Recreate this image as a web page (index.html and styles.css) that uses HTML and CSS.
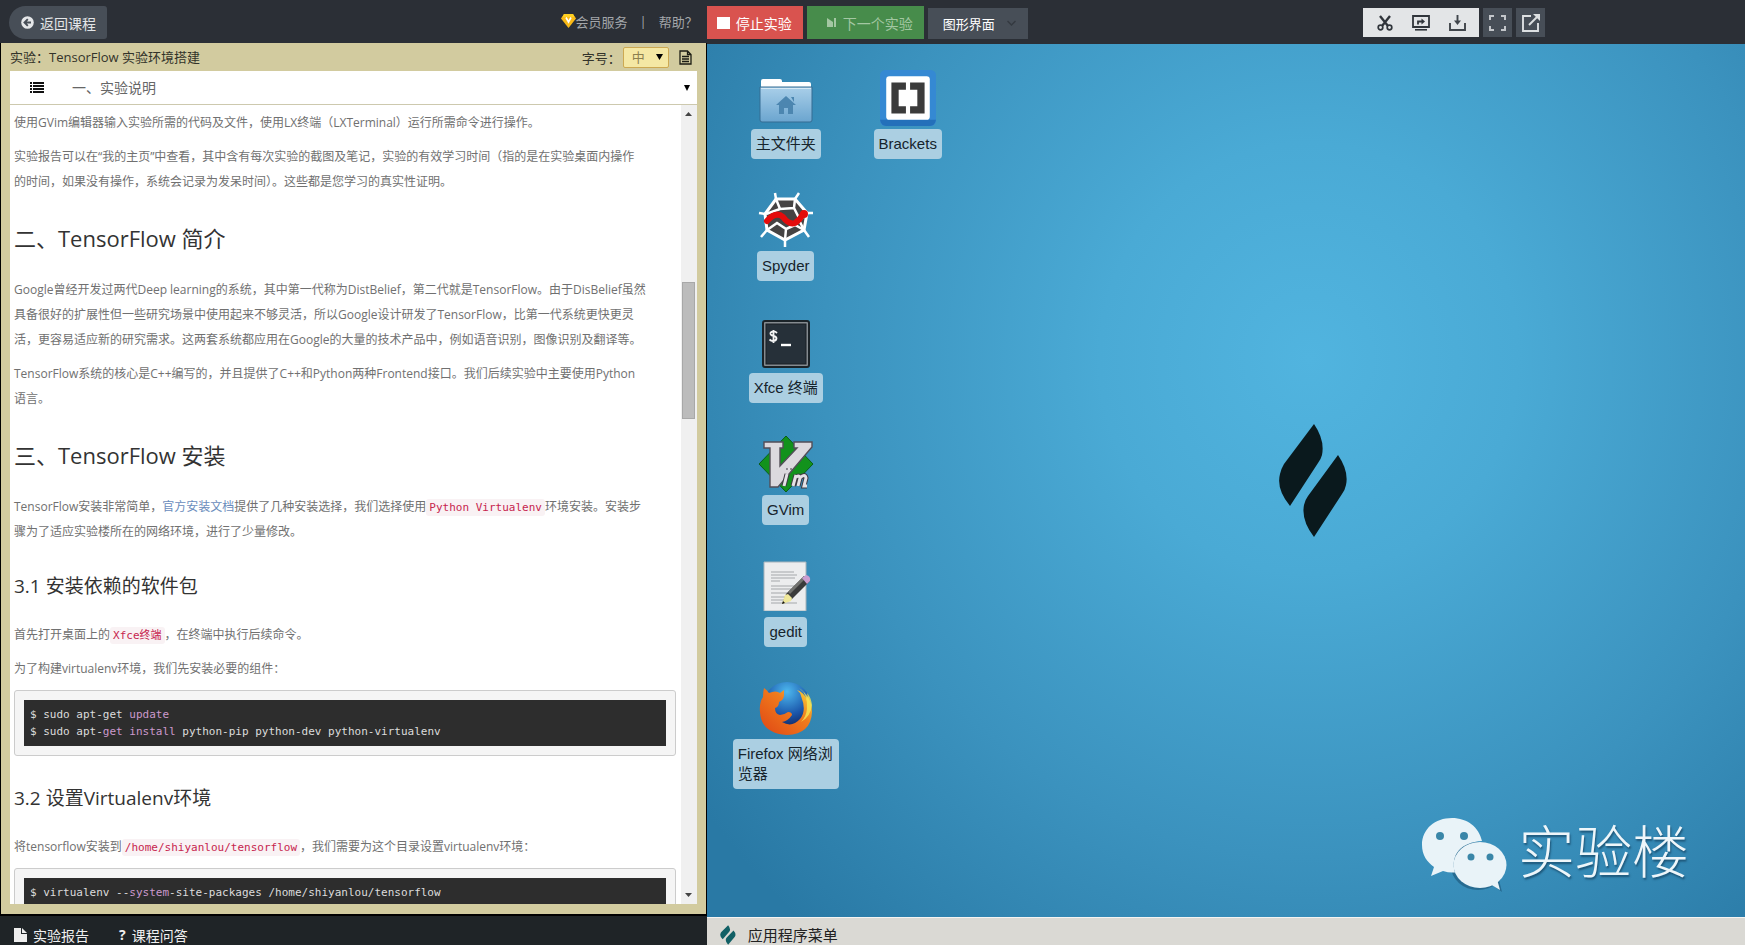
FILE: index.html
```html
<!DOCTYPE html>
<html lang="zh-CN">
<head>
<meta charset="utf-8">
<title>TensorFlow 实验环境搭建</title>
<link rel="stylesheet" href="styles.css">
</head>
<body>
<div class="app">
  <section class="lesson">
    <header class="bar">
      <button class="back" type="button">
        <svg width="13" height="13" viewBox="0 0 13 13"><circle cx="6.5" cy="6.5" r="6.3" fill="#e4e6e8"/><path d="M10 6.5H4M6.800 3.200L3.500 6.500L6.800 9.800" fill="none" stroke="#474e57" stroke-width="1.900"/></svg>
        返回课程
      </button>
      <nav class="links">
        <a href="#vip"><svg width="15" height="14" viewBox="0 0 15 14"><path d="M3 0h9l3 4.500L7.500 14L0 4.500z" fill="#f9b916"/><path d="M3 0h9l1.500 3h-12z" fill="#ffd021"/><path d="M5 3.500L7.500 8L10 3.500" fill="none" stroke="#fff" stroke-width="1.600"/></svg>会员服务</a>
        <span class="sep">|</span>
        <a href="#help">帮助？</a>
      </nav>
    </header>
    <div class="frame">
      <div class="titlebar">
        <h1>实验：TensorFlow 实验环境搭建</h1>
        <div class="tools">
          <label for="size">字号：</label>
          <span class="pick">
            <select id="size" class="size"><option>中</option></select>
            <svg class="tri" width="7" height="6" viewBox="0 0 7 6"><path d="M0 0h7L3.500 6z" fill="#000"/></svg>
          </span>
          <button class="doc" type="button" aria-label="文档">
            <svg width="13" height="15" viewBox="0 0 13 15"><path d="M1 1h7.500L12 4.500V14H1zM8.500 1v3.500H12M3 6.500h7M3 9h7M3 11.500h7" fill="none" stroke="#1c1c14" stroke-width="1.300"/></svg>
          </button>
        </div>
      </div>
      <div class="chapter">
        <svg width="14" height="11" viewBox="0 0 14 11"><path d="M0 1h2M0 4h2M0 7h2M0 10h2M3 1h11M3 4h11M3 7h11M3 10h11" stroke="#111" stroke-width="2"/></svg>
        <span class="pick grow">
          <select class="section" aria-label="章节"><option>一、实验说明</option></select>
          <svg class="tri" width="6" height="6" viewBox="0 0 6 6"><path d="M0 0h6L3 6z" fill="#000"/></svg>
        </span>
      </div>
      <div class="reader">
        <article class="doc-body">
          <p>使用GVim编辑器输入实验所需的代码及文件，使用LX终端（LXTerminal）运行所需命令进行操作。</p>
          <p>实验报告可以在“我的主页”中查看，其中含有每次实验的截图及笔记，实验的有效学习时间（指的是在实验桌面内操作<br>的时间，如果没有操作，系统会记录为发呆时间）。这些都是您学习的真实性证明。</p>
          <h2>二、TensorFlow 简介</h2>
          <p>Google曾经开发过两代Deep learning的系统，其中第一代称为DistBelief，第二代就是TensorFlow。由于DisBelief虽然<br>具备很好的扩展性但一些研究场景中使用起来不够灵活，所以Google设计研发了TensorFlow，比第一代系统更快更灵<br>活，更容易适应新的研究需求。这两套系统都应用在Google的大量的技术产品中，例如语音识别，图像识别及翻译等。</p>
          <p>TensorFlow系统的核心是C++编写的，并且提供了C++和Python两种Frontend接口。我们后续实验中主要使用Python<br>语言。</p>
          <h2>三、TensorFlow 安装</h2>
          <p>TensorFlow安装非常简单，<a href="#docs">官方安装文档</a>提供了几种安装选择，我们选择使用<code>Python Virtualenv</code>环境安装。安装步<br>骤为了适应实验楼所在的网络环境，进行了少量修改。</p>
          <h3>3.1 安装依赖的软件包</h3>
          <p>首先打开桌面上的<code>Xfce终端</code>，在终端中执行后续命令。</p>
          <p>为了构建virtualenv环境，我们先安装必要的组件：</p>
          <div class="block"><pre>$ sudo apt-get <b>update</b>
$ sudo apt-<b>get</b> <b>install</b> python-pip python-dev python-virtualenv</pre></div>
          <h3>3.2 设置Virtualenv环境</h3>
          <p>将tensorflow安装到<code>/home/shiyanlou/tensorflow</code>，我们需要为这个目录设置virtualenv环境：</p>
          <div class="block"><pre>$ virtualenv --<b>system</b>-site-packages /home/shiyanlou/tensorflow</pre></div>
        </article>
        <div class="scroll">
          <svg width="7" height="4" viewBox="0 0 7 4"><path d="M0 4h7L3.500 0z" fill="#444"/></svg>
          <div class="track"><div class="thumb"></div></div>
          <svg width="7" height="4" viewBox="0 0 7 4"><path d="M0 0h7L3.500 4z" fill="#444"/></svg>
        </div>
      </div>
    </div>
    <footer class="foot">
      <a href="#report"><svg width="13" height="14" viewBox="0 0 13 14"><path d="M0 0h7v6h6v8H0z" fill="#eee"/><path d="M8 0l5 5H8z" fill="#eee"/></svg>实验报告</a>
      <a href="#qa"><strong>?</strong>课程问答</a>
    </footer>
  </section>

  <section class="remote">
    <header class="bar actions">
      <button class="stop" type="button"><svg width="13" height="12" viewBox="0 0 13 12"><path d="M0 0h13v12H0z" fill="#fff"/></svg>停止实验</button>
      <button class="next" type="button"><svg width="9" height="9" viewBox="0 0 9 9"><path d="M0 0L6 4V9H0zM7 0h2v9H7z" fill="#a3c7a2"/></svg>下一个实验</button>
      <span class="pick">
        <select class="mode" aria-label="界面"><option>图形界面</option></select>
        <svg class="tri" width="9" height="6" viewBox="0 0 9 6"><path d="M.500 1L4.500 5L8.500 1" fill="none" stroke="#343a41" stroke-width="1.500"/></svg>
      </span>
      <div class="icons">
        <div class="group">
          <button type="button" aria-label="剪切"><svg width="16" height="16" viewBox="0 0 16 16" fill="none" stroke="#30353b"><path d="M3 1L11 11M13 1L5 11" stroke-width="2.400"/><circle cx="3.500" cy="12.500" r="2.300" stroke-width="1.700"/><circle cx="12.500" cy="12.500" r="2.300" stroke-width="1.700"/></svg></button>
          <button type="button" aria-label="共享屏幕"><svg width="18" height="16" viewBox="0 0 18 16" fill="none" stroke="#30353b"><path d="M1 1h16v11H1z" stroke-width="1.800"/><path d="M3 14.800h12" stroke-width="1.600"/><path d="M6 9.500V6.500h4" stroke-width="1.800"/><path d="M9.500 3.500L13 6.500L9.500 9.500z" fill="#30353b" stroke="none"/></svg></button>
          <button type="button" aria-label="下载"><svg width="17" height="16" viewBox="0 0 17 16" fill="none" stroke="#40454b"><path d="M1 8v7h15V8" stroke-width="1.900"/><path d="M8.500 0v8" stroke-width="1.900"/><path d="M5 5.500h7L8.500 10z" fill="#40454b" stroke="none"/></svg></button>
        </div>
        <button class="dark" type="button" aria-label="全屏"><svg width="17" height="16" viewBox="0 0 17 16"><path d="M1 5V1h4M12 1h4v4M16 11v4h-4M5 15H1v-4" fill="none" stroke="#c3c6ca" stroke-width="2"/></svg></button>
        <button class="dark" type="button" aria-label="新窗口"><svg width="18" height="18" viewBox="0 0 18 18"><path d="M9 2H1v15h15V9" fill="none" stroke="#dde0e2" stroke-width="1.900"/><path d="M7 11L15 3" stroke="#dde0e2" stroke-width="2"/><path d="M11 0h7v7z" fill="#dde0e2"/></svg></button>
      </div>
    </header>
    <main class="desktop">
      <div class="launchers">
        <div class="item"><span class="pic low"><svg width="54" height="46" viewBox="0 0 54 46"><defs><linearGradient id="fold" x2="0" y2="1"><stop offset="0" stop-color="#a9cfe9"/><stop offset="1" stop-color="#6ba5cf"/></linearGradient></defs><path d="M2 12V3q0-2 2-2h17q2 0 2 2v1h27q2 0 2 2v7z" fill="#fff"/><path d="M1 9h52v33q0 2-2 2H3q-2 0-2-2z" fill="url(#fold)" stroke="#356c93"/><path d="M2 10.500h50" stroke="#d6e9f5"/><path d="M27 18l10 9h-3v9h-5v-6h-4v6h-5v-9h-3zM32 19h3v5z" fill="#4c86b0"/></svg></span><span class="name">主文件夹</span></div>
        <div class="item"><span class="pic"><svg width="56" height="56" viewBox="0 0 54 54"><rect width="54" height="54" rx="5" fill="#3589d3"/><path d="M0 48h54q-1 6-6 6H6q-5 0-6-6" fill="#2470ba"/><rect x="6" y="6" width="42" height="42" rx="3" fill="#fff"/><path d="M11 12h14v7h-7v16h7v7H11zM43 12H29v7h7v16h-7v7h14z" fill="#3b3b3b"/></svg></span><span class="name">Brackets</span></div>
        <div class="item"><span class="pic"><svg width="56" height="56" viewBox="0 0 56 56"><path d="M18 7h19l12 14-3 17-19 10L9 38 7 22z" fill="#454343" stroke="#fff" stroke-width="3"/><path d="M18 7L17 1M37 7l4-6M49 21h6M46 38l5 7M27 48v7M9 38l-6 7M7 22l-6-1" stroke="#fff" stroke-width="2.500"/><path d="M18 7l4 10 14-1 1-9M36 16l6 12M42 28l7-7M22 17L8 22M42 30l4 8M27 48l1-11-9-6L9 38M28 37l9-4 9 5" fill="none" stroke="#fff" stroke-width="2.500"/><path d="M9 29q9-10 16-4 6 8 12 6 5-3 8-9" fill="none" stroke="#e40b0b" stroke-width="6" stroke-linecap="round"/><circle cx="46" cy="22" r="4" fill="#e40b0b"/></svg></span><span class="name">Spyder</span></div>
        <div class="item"><span class="pic low"><svg width="48" height="48" viewBox="0 0 48 48"><rect x="1" y="1" width="46" height="46" rx="2" fill="#858b90" stroke="#1b2328" stroke-width="2"/><rect x="4" y="4" width="40" height="40" fill="#263039" stroke="#1a2026"/><path d="M15 13q-2-2-4-1.500-3 .5-2.500 2.500.5 1.500 3 2 3 .5 3 2.500-.5 2.500-3.500 2.500-2 0-3.500-1.500M11.500 10v13" fill="none" stroke="#f4f5f5" stroke-width="1.800"/><path d="M19 25h10" stroke="#fff" stroke-width="2.400"/></svg></span><span class="name">Xfce 终端</span></div>
        <div class="item"><span class="pic"><svg width="56" height="56" viewBox="0 0 56 56"><path d="M28 0L55 28 28 56 1 28z" fill="#12921c" stroke="#0b5e18"/><path d="M6 6h19v6h-3v18L39 12h-3V6h18v5L20 51h-8V12H6z" fill="#dcd9de" stroke="#534e58" stroke-width="1.400"/><g fill="none" stroke="#3e3a42" stroke-width="5"><path d="M29 38l-3 12M35 50l3-11M37 42q4-4 5 0l-2 8M42 42q5-5 6 0l-2 8h3M31 32v2"/></g><g fill="none" stroke="#e4e1e6" stroke-width="3"><path d="M29 38l-3 12M35 50l3-11M37 42q4-4 5 0l-2 8M42 42q5-5 6 0l-2 8h3M31 32v2"/></g></svg></span><span class="name">GVim</span></div>
        <div class="item"><span class="pic"><svg width="50" height="50" viewBox="0 0 50 50"><path d="M3 1h42v49H3z" fill="#ecedee" stroke="#a8b4bb"/><path d="M10 11h23M10 14h26M10 17h24M10 20h9M10 25h26M10 28h20M10 32h18M10 36h15M10 39h13M10 42h26" stroke="#a4a7aa"/><path d="M21 43l4-10 18-18 6 5-18 18z" fill="#3a3b3b"/><path d="M27 31L43 15l2 2-16 16z" fill="#72736f"/><path d="M21 43l3-9 3-1 4 4-1 3z" fill="#efe89b"/><path d="M21 43l1-3 2 2z" fill="#111"/><path d="M41 17l4-3q5 1 4 6l-3 3z" fill="#ca9dd0"/></svg></span><span class="name">gedit</span></div>
        <div class="item"><span class="pic"><svg width="54" height="54" viewBox="0 0 54 54"><defs><radialGradient id="globe" cx=".5" cy=".2" r=".8"><stop offset="0" stop-color="#4db8ee"/><stop offset=".6" stop-color="#1b57ab"/><stop offset="1" stop-color="#101f57"/></radialGradient><linearGradient id="fox" x1="0" y1="1" x2="1" y2="0"><stop offset="0" stop-color="#df4514"/><stop offset=".6" stop-color="#f07b1d"/><stop offset="1" stop-color="#fbe33d"/></linearGradient></defs><circle cx="28" cy="25" r="24" fill="url(#globe)"/><path d="M5 7q3 2 5 5 7-3 11 0l4-3v5q0 5-5 7 0 5-4 6 0 6 5 7 4 0 8-3 4 0 4 3-4 6-10 7 10 6 18-3 7-8 1-23-1-4-4-6 6 2 10 9 0-3-1-5 6 8 6 18-1 22-25 23Q2 52 1 31 0 22 4 16 4 11 5 7z" fill="url(#fox)"/><path d="M40 7q9 6 8 21-1 8-6 13 10-6 11-17-1-8-5-12l1 5q-3-6-9-10z" fill="#f7e955" opacity=".8"/></svg></span><span class="name">Firefox 网络浏览器</span></div>
      </div>
      <svg class="emblem" width="71" height="116" viewBox="0 0 71 116"><path d="M36 1Q47 17 44 32Q43 36 40 40L12 83Q-2 66 2 51Q3 46 6 41ZM60 32Q71 48 68 62Q67 67 64 71L36 114Q23 97 26 82Q27 77 30 73Z" fill="#0a191d"/></svg>
      <div class="mark">
        <svg width="88" height="76" viewBox="0 0 88 76"><g fill="#1d5577" opacity=".6"><ellipse cx="57" cy="49" rx="27" ry="24"/><path d="M70 67l11 8-3-12z"/></g><path d="M31 1C14 1 1 12 1 28c0 10 5 17 12 22l-3 9 12-5q6 2 12 1.500C29 38 40 25 61 24 58 10 46 1 31 1z" fill="#e9f3f8"/><ellipse cx="59" cy="48" rx="26.500" ry="23" fill="#e9f3f8"/><path d="M69 67l10 6-3-11z" fill="#e9f3f8"/><g fill="#3a86a8"><circle cx="19" cy="19" r="4"/><circle cx="43" cy="19" r="4"/><circle cx="50" cy="40" r="3.500"/><circle cx="69" cy="40" r="3.500"/></g></svg>
        <span>实验楼</span>
      </div>
    </main>
    <footer class="taskbar">
      <button type="button"><svg width="16" height="20" viewBox="0 0 71 116" preserveAspectRatio="none"><path d="M36 1Q47 17 44 32Q43 36 40 40L12 83Q-2 66 2 51Q3 46 6 41ZM60 32Q71 48 68 62Q67 67 64 71L36 114Q23 97 26 82Q27 77 30 73Z" fill="#116065"/></svg>应用程序菜单</button>
    </footer>
  </section>
</div>
</body>
</html>
```
FILE: styles.css
```css
* { box-sizing: border-box; }
body {
  margin: 0;
  font-family: "Open Sans", "Noto Sans CJK SC", sans-serif;
  font-size: 12px;
}
button, select {
  font: inherit;
  color: inherit;
  border: 0;
  margin: 0;
  padding: 0;
  background: none;
  appearance: none;
}
a { color: inherit; text-decoration: none; }
svg { display: block; flex: none; }
.app { display: flex; height: 100vh; overflow: hidden; background: #000; }
.lesson { flex: 0 0 40.5%; min-width: 0; display: flex; flex-direction: column; }
.remote { flex: 1; min-width: 0; display: flex; flex-direction: column; }

.bar {
  flex: none;
  display: flex;
  align-items: center;
  height: 43px;
  padding: 2px 9px 0;
  background: #2b2f36;
}
.back {
  display: flex;
  align-items: center;
  gap: 6px;
  height: 33px;
  padding: 0 11px 0 12px;
  border-radius: 17px 3px 3px 17px;
  background: #474e57;
  color: #e4e6e8;
  font-size: 14px;
}
.links {
  display: flex;
  align-items: center;
  gap: 12px;
  margin: 0 0 3px auto;
  color: #a3a6aa;
  font-size: 13px;
}
.links a { display: flex; align-items: center; }

.frame {
  flex: 1;
  min-height: 0;
  display: flex;
  flex-direction: column;
  margin: 0 1px 2px;
  padding: 0 9px 10px;
  background: #d2cb9f;
}
.titlebar {
  flex: none;
  display: flex;
  align-items: center;
  justify-content: space-between;
  height: 28px;
  color: #33332a;
}
.titlebar h1 { margin: 0 0 2px; font-size: 13px; font-weight: 400; }
.tools { display: flex; align-items: center; padding-right: 5px; font-size: 13px; }
.pick { position: relative; display: flex; align-items: center; }
.pick.grow { flex: 1; }
.tri { position: absolute; right: 7px; pointer-events: none; }
.size {
  width: 46px;
  height: 21px;
  margin: 0 10px 0 2px;
  padding-left: 8px;
  border: 1px solid #cda952;
  border-radius: 2px;
  background: #f5e8a4;
  color: #8b8050;
}
.tools .tri { right: 16px; }
.chapter {
  flex: none;
  display: flex;
  align-items: center;
  height: 34px;
  padding-left: 20px;
  background: #fff;
  border-bottom: 1px solid #cdc9ae;
}
.section {
  width: 100%;
  height: 28px;
  padding-left: 28px;
  color: #666;
  font-size: 14px;
}
.reader { flex: 1; min-height: 0; display: flex; overflow: hidden; background: #fff; }
.doc-body {
  flex: 1;
  min-width: 0;
  padding: 5px 5px 0 4px;
  color: #707070;
  line-height: 25px;
  white-space: nowrap;
}
.doc-body p { margin: 0 0 9px; }
.doc-body a { color: #6a8cbc; }
.doc-body h2 {
  margin: 28px 0 23px;
  color: #333;
  font-size: 22px;
  font-weight: 400;
  line-height: 32px;
}
.doc-body h3 {
  margin: 28px 0 22px;
  color: #333;
  font-size: 19px;
  font-weight: 400;
  line-height: 28px;
}
.doc-body code {
  padding: 2px 3px;
  border-radius: 3px;
  background: #f9f2f4;
  color: #c7254e;
  font: 11px "DejaVu Sans Mono", "Noto Sans CJK SC", monospace;
}
.block {
  padding: 9px;
  border: 1px solid #ccc;
  border-radius: 3px;
  background: #f5f5f5;
}
.block pre {
  margin: 0;
  padding: 6px;
  background: #2d2d2d;
  color: #dcdcdc;
  font: 11px/17px "DejaVu Sans Mono", monospace;
}
.block b { color: #cc99cc; font-weight: 400; }
.scroll {
  flex: none;
  display: flex;
  flex-direction: column;
  align-items: center;
  width: 16px;
  padding: 7px 0;
  background: #f0f0f0;
}
.track { flex: 1; width: 13px; padding-top: 166px; }
.thumb { height: 20%; min-height: 137px; border: 1px solid #a8a8a8; background: #bcbcbc; }
.foot {
  flex: none;
  display: flex;
  align-items: center;
  gap: 30px;
  height: 29px;
  padding: 8px 14px 0;
  background: #1f2427;
  color: #f0f0f0;
  font-size: 14px;
}
.foot a { display: flex; align-items: center; gap: 6px; }

.actions { height: 44px; gap: 4px; padding: 1px 0 0; }
.stop, .next {
  display: flex;
  align-items: center;
  height: 33px;
  color: #fff;
  font-size: 14px;
}
.stop { gap: 6px; padding: 0 11px 0 10px; background: #d9534f; }
.next { gap: 7px; padding: 0 11px 0 20px; background: #478c4b; color: #a3c7a2; }
.mode {
  width: 100px;
  height: 31px;
  margin: 2px 0 0;
  padding-left: 15px;
  background: #474e57;
  color: #fff;
  font-size: 13px;
}
.actions .tri { right: 12px; }
.icons { display: flex; gap: 4px; margin: 0 200px 0 auto; }
.group { display: flex; background: #e3e5e7; padding: 0 4px; }
.group button { display: grid; place-items: center; width: 36px; height: 29px; }
.dark { display: grid; place-items: center; width: 29px; height: 29px; background: #474e57; }

.desktop {
  position: relative;
  flex: 1;
  min-height: 0;
  background: radial-gradient(ellipse 72% 88% at 58% 36%, #51b4df 0%, #4aaad5 28%, #3b92be 65%, #2979a5 100%);
}
.launchers {
  display: grid;
  grid-template-columns: 122px 122px;
  grid-auto-rows: 122px;
  padding: 26px 0 0 18px;
}
.item { grid-column: 1; display: flex; flex-direction: column; align-items: center; gap: 3px; }
.item:nth-child(2) { grid-column: 2; grid-row: 1; }
.pic { display: grid; place-items: center; width: 56px; height: 56px; }
.pic.low { align-items: end; padding-bottom: 2px; }
.name {
  max-width: 106px;
  padding: 5px;
  border-radius: 4px;
  background: #abcfe2;
  color: #16242c;
  font: 15px/20px "Liberation Sans", "Noto Sans CJK SC", sans-serif;
}
.emblem { position: absolute; left: 55%; top: 43.4%; }
.mark {
  position: absolute;
  right: 56px;
  bottom: 23px;
  display: flex;
  align-items: center;
  gap: 9px;
  color: #eef6fa;
  font-size: 57px;
  font-weight: 300;
  line-height: 70px;
  text-shadow: 1px 2px 2px #1d5577;
}
.mark span { padding-bottom: 8px; }
.taskbar {
  flex: none;
  height: 28px;
  padding: 6px 13px 0;
  border-top: 1px solid #f4f4f2;
  background: #dad9d4;
  color: #222;
  font-size: 15px;
}
.taskbar button { display: flex; align-items: center; gap: 12px; line-height: 22px; }
```
